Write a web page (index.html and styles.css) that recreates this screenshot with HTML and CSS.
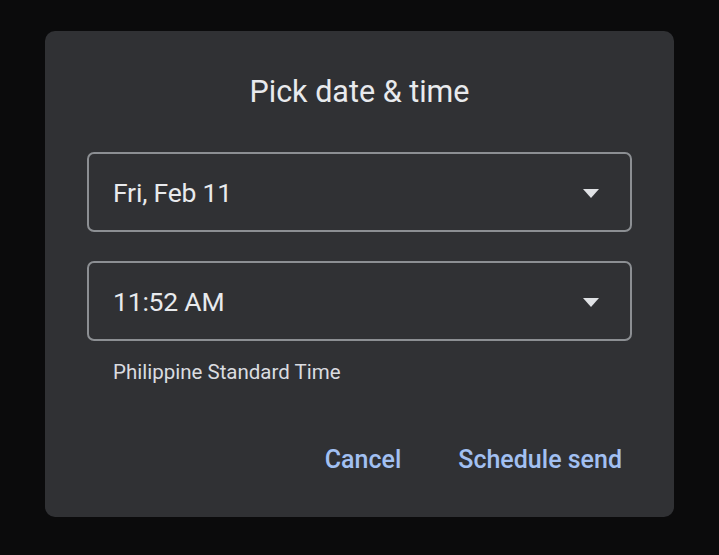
FILE: index.html
```html
<!DOCTYPE html>
<html lang="en">
<head>
<meta charset="utf-8">
<title>Pick date &amp; time</title>
<link rel="stylesheet" href="styles.css">
</head>
<body>
<div class="dialog">
  <h1 class="title">Pick date &amp; time</h1>
  <div class="field field-date">
    <span class="value">Fri, Feb 11</span>
    <span class="arrow"></span>
  </div>
  <div class="field field-time">
    <span class="value">11:52 AM</span>
    <span class="arrow"></span>
  </div>
  <div class="helper">Philippine Standard Time</div>
  <div class="actions">
    <button class="btn">Cancel</button>
    <button class="btn">Schedule send</button>
  </div>
</div>
</body>
</html>
```
FILE: styles.css
```css
html, body {
  margin: 0;
  padding: 0;
  background: #0b0b0c;
  font-family: Roboto, "Liberation Sans", sans-serif;
}
body {
  width: 719px;
  height: 555px;
  overflow: hidden;
  padding-top: 31px;
  padding-left: 45px;
  box-sizing: border-box;
}
.dialog {
  width: 629px;
  height: 486px;
  background: #303134;
  border-radius: 10px;
  padding: 41px 42px 0;
  box-sizing: border-box;
  display: flex;
  flex-direction: column;
}
.title {
  margin: 0;
  font-size: 30.5px;
  line-height: 40px;
  font-weight: 400;
  color: #e8eaed;
  text-align: center;
}
.field {
  height: 80px;
  border: 2px solid #8c8f93;
  border-radius: 7px;
  box-sizing: border-box;
  display: flex;
  align-items: center;
  justify-content: space-between;
  padding: 0 31px 0 24px;
}
.field-date { margin-top: 40px; }
.field-time { margin-top: 29px; }
.value {
  font-size: 26.5px;
  letter-spacing: -0.2px;
  color: #e8eaed;
}
.arrow {
  width: 0;
  height: 0;
  border-left: 8.5px solid transparent;
  border-right: 8.5px solid transparent;
  border-top: 9px solid #e0e2e5;
  margin-top: 2px;
}
.helper {
  margin-top: 19px;
  padding-left: 26px;
  font-size: 20.5px;
  line-height: 24px;
  color: #dadce0;
}
.actions {
  margin-top: 64px;
  display: flex;
  justify-content: flex-end;
  gap: 37px;
}
.btn {
  background: none;
  border: none;
  padding: 0 10px;
  font-family: inherit;
  font-size: 25px;
  line-height: 24px;
  font-weight: 500;
  color: #a2c0f2;
  cursor: pointer;
}
```
